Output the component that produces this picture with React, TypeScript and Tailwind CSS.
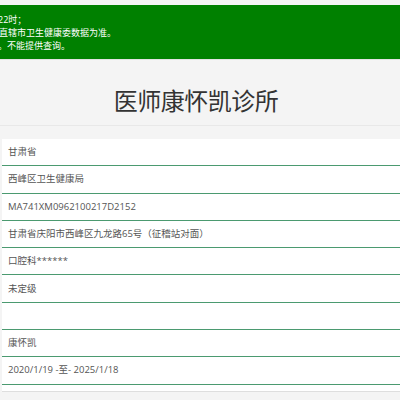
const rows = [
    "甘肃省",
    "西峰区卫生健康局",
    "MA741XM0962100217D2152",
    "甘肃省庆阳市西峰区九龙路65号（征稽站对面）",
    "口腔科******",
    "未定级",
    "",
    "康怀凯",
    "2020/1/19 -至- 2025/1/18",
];

const App = () => {
    return (
        <div className="min-h-[400px] bg-[#f4f4f4] overflow-hidden font-['Open_Sans','Noto_Sans_CJK_SC',sans-serif]">
            <div className="pt-[5px]">
                <div className="h-[55px] bg-[#008000] border-b border-[#e2e2e2] text-white text-[9px] leading-[13px] pt-[8px] overflow-hidden whitespace-nowrap">
                    <p className="ml-[-2px]">22时；</p>
                    <p className="ml-[-1px]">直辖市卫生健康委数据为准。</p>
                    <p className="ml-[-2px]">。不能提供查询。</p>
                </div>
            </div>
            <div className="h-[66px] border-b border-[#e8e8e8] flex items-center justify-center pt-[14px] pr-[8px]">
                <h1 className="text-[24px] text-[#333] tracking-[-0.5px] font-['Noto_Sans_CJK_SC',sans-serif]">医师康怀凯诊所</h1>
            </div>
            <div className="mt-[13px] ml-[2px] bg-white pb-[6px] border-b border-[#dedede]">
                {rows.map((text, i) => (
                    <div
                        key={i}
                        className="h-[27.3px] border-b border-[#4b9a70] flex items-center pl-[6px] text-[9.5px] text-[#555]"
                    >
                        {text}
                    </div>
                ))}
            </div>
        </div>
    );
};

export default App;
